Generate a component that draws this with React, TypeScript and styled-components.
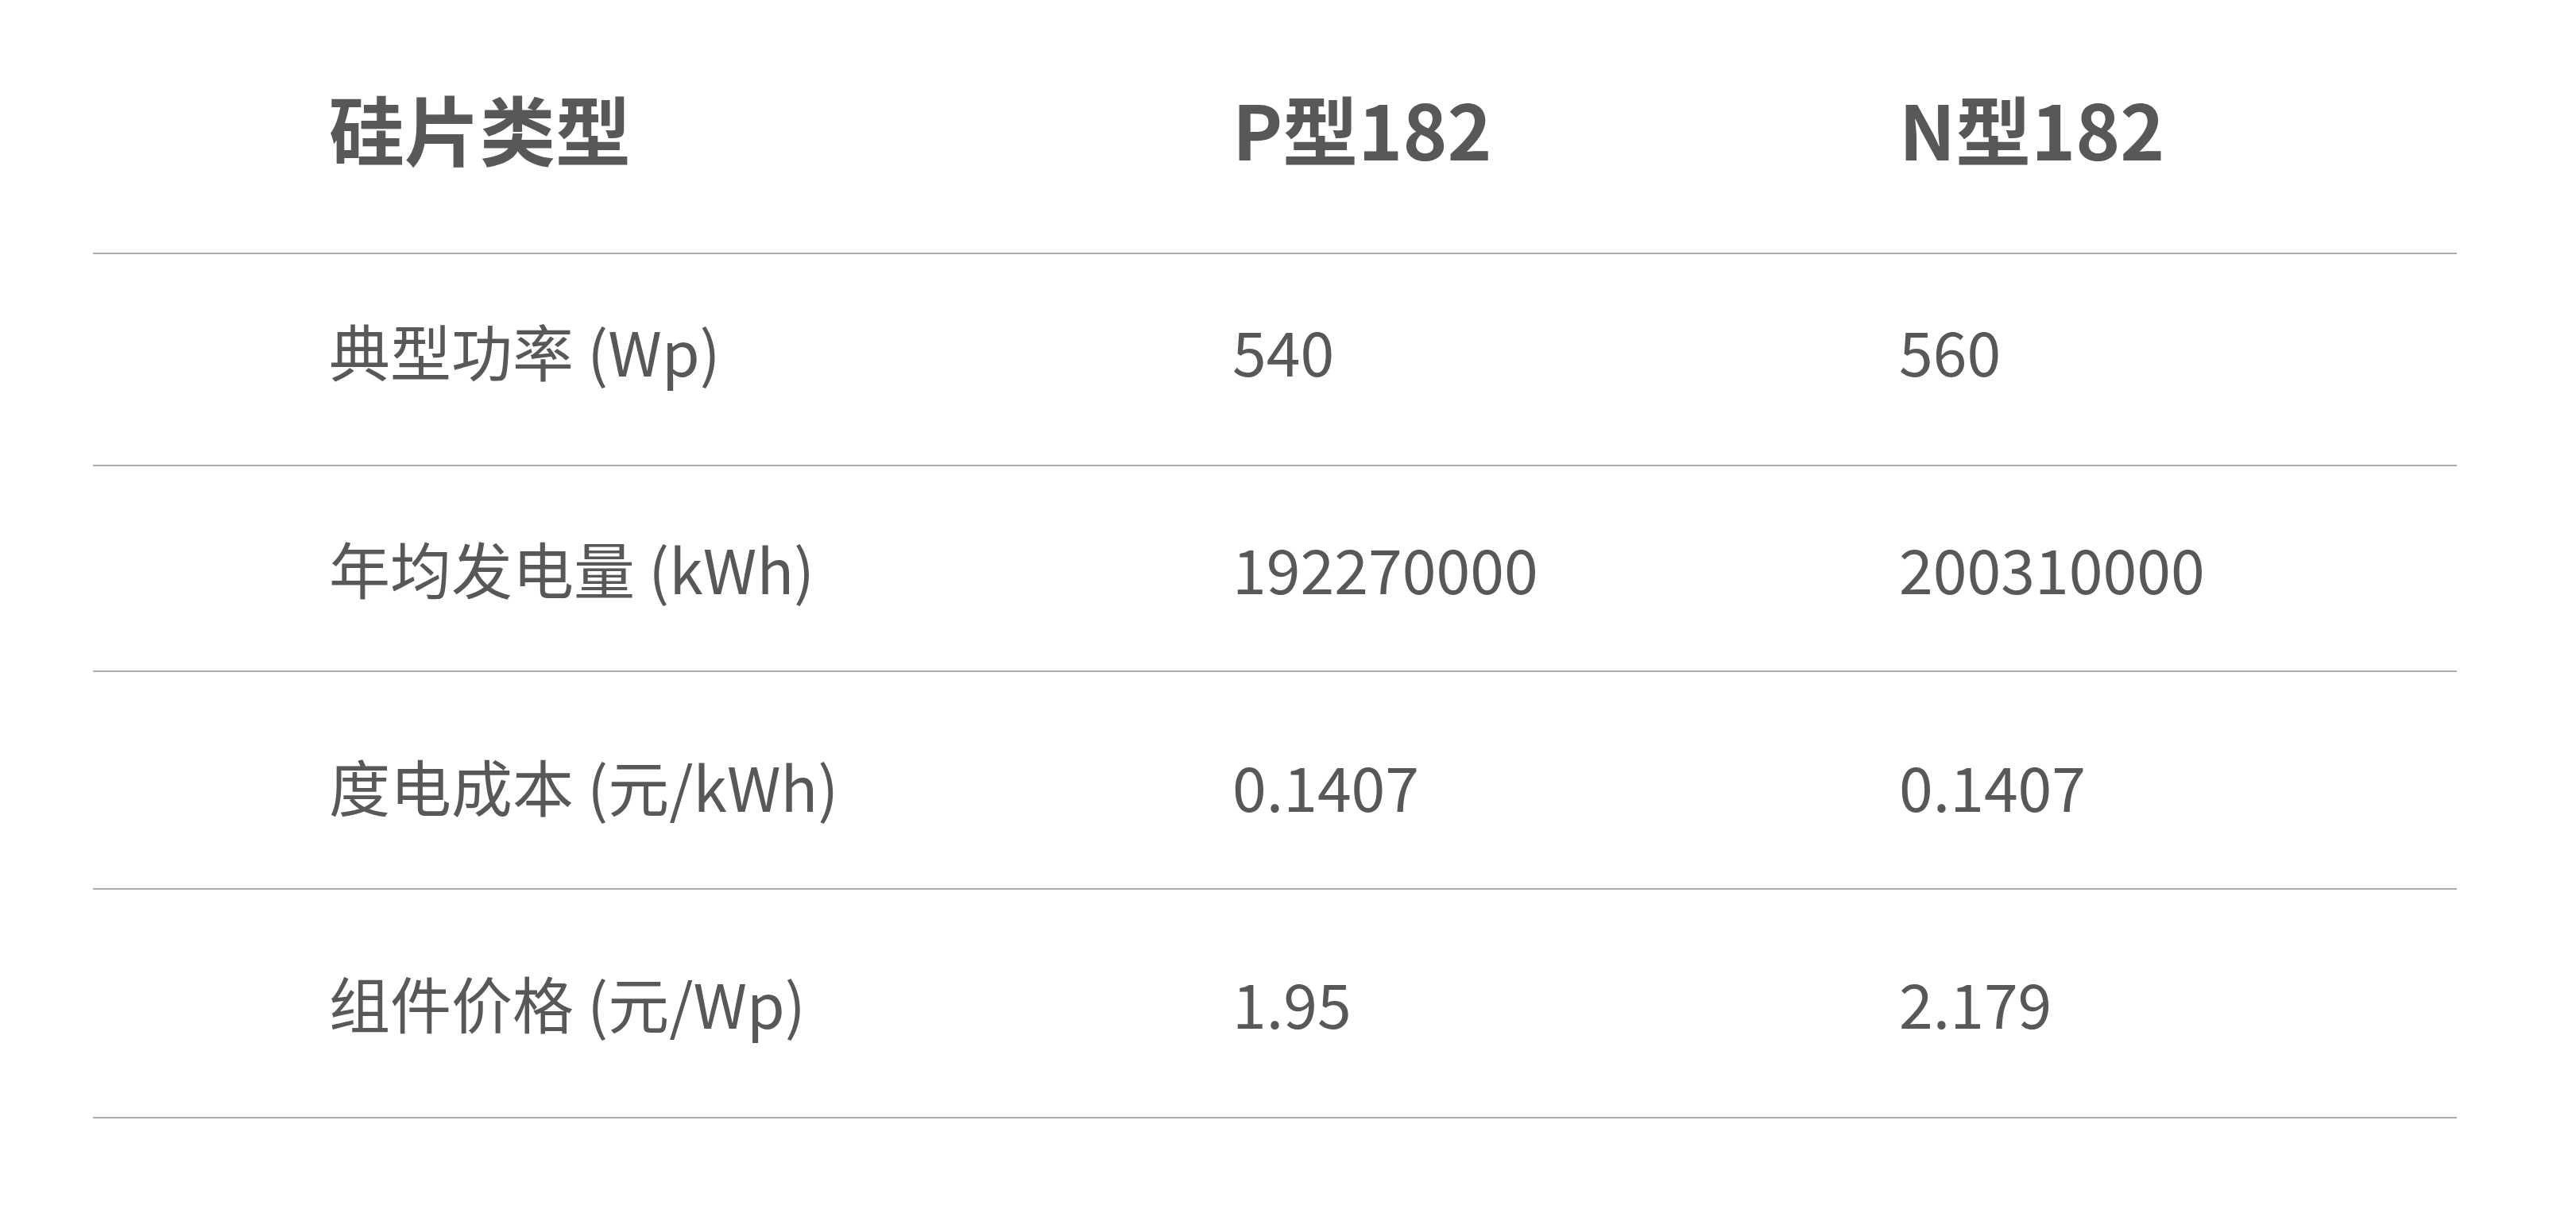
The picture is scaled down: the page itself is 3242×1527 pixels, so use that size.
import React from 'react';
import styled, { createGlobalStyle } from 'styled-components';

const GlobalStyle = createGlobalStyle`
    html, body {
        margin: 0;
        padding: 0;
        background: #ffffff;
    }
    body {
        font-family: "Noto Sans CJK SC", "Noto Sans", sans-serif;
        color: #595757;
    }
`;

const Page = styled.div`
    width: 3242px;
    height: 1527px;
    background: #ffffff;
`;

const Table = styled.div`
    display: flex;
    flex-direction: column;
    margin-left: 117px;
    width: 2975px;
`;

// shift moves the text's centre down (+) or up (-) inside its row
const Row = styled.div<{ $h: number; $shift: number }>`
    box-sizing: border-box;
    height: ${p => p.$h}px;
    display: grid;
    grid-template-columns: 1137px 839px 1fr;
    align-items: center;
    padding-left: 297px;
    padding-top: ${p => Math.max(0, p.$shift * 2)}px;
    padding-bottom: ${p => Math.max(0, -p.$shift * 2)}px;
    border-bottom: 2px solid #adadad;
`;

const Cell = styled.div<{ $head?: boolean }>`
    font-size: ${p => (p.$head ? 95 : 77)}px;
    font-weight: ${p => (p.$head ? 700 : 400)};
    line-height: 1.2;
    white-space: nowrap;
    color: #595757;
`;

type Line = { label: string; p: string; n: string; h: number; shift: number };

const rows: Line[] = [
    { label: '典型功率 (Wp)', p: '540', n: '560', h: 267, shift: -11 },
    { label: '年均发电量 (kWh)', p: '192270000', n: '200310000', h: 259, shift: 0 },
    { label: '度电成本 (元/kWh)', p: '0.1407', n: '0.1407', h: 274, shift: 7 },
    { label: '组件价格 (元/Wp)', p: '1.95', n: '2.179', h: 288, shift: -1 },
];

export default function App() {
    return (
        <Page>
            <GlobalStyle />
            <Table>
                <Row $h={320} $shift={2}>
                    <Cell $head>硅片类型</Cell>
                    <Cell $head>P型182</Cell>
                    <Cell $head>N型182</Cell>
                </Row>
                {rows.map(r => (
                    <Row key={r.label} $h={r.h} $shift={r.shift}>
                        <Cell>{r.label}</Cell>
                        <Cell>{r.p}</Cell>
                        <Cell>{r.n}</Cell>
                    </Row>
                ))}
            </Table>
        </Page>
    );
}
